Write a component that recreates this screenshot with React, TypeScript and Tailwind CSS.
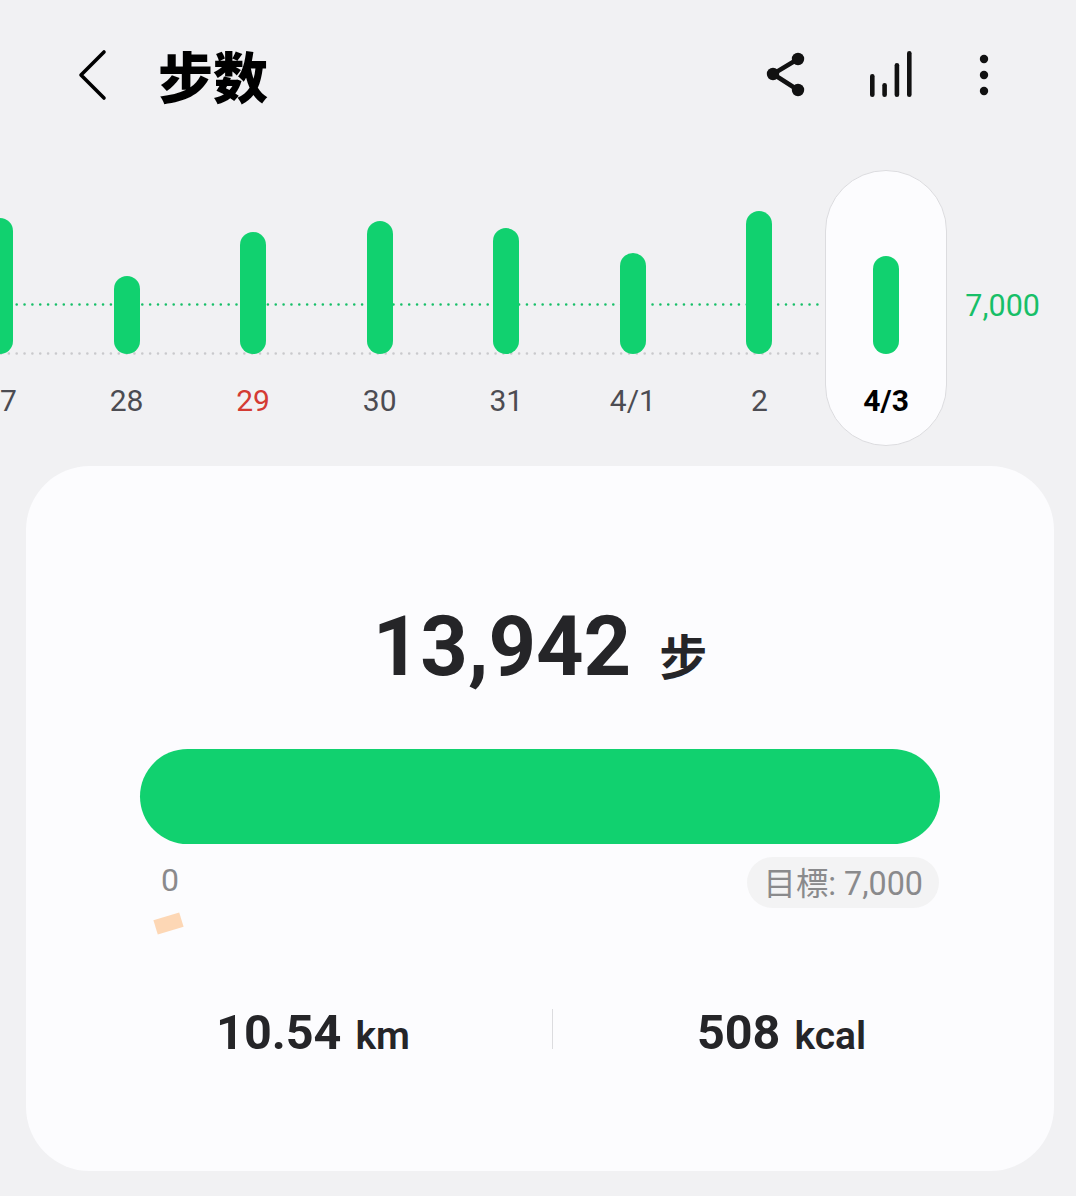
const days = [
  { label: "27", height: 136 },
  { label: "28", height: 78 },
  { label: "29", height: 122, sunday: true },
  { label: "30", height: 133 },
  { label: "31", height: 126 },
  { label: "4/1", height: 101 },
  { label: "2", height: 143 },
  { label: "4/3", height: 98, selected: true },
];

function DottedLine({ color, className }: { color: string; className: string }) {
  return (
    <svg className={className} width="820" height="3" viewBox="0 0 820 3">
      <line
        x1="1"
        y1="1.5"
        x2="820"
        y2="1.5"
        stroke={color}
        strokeWidth="2.6"
        strokeLinecap="round"
        strokeDasharray="0 7.85"
      />
    </svg>
  );
}

function Header() {
  return (
    <header className="flex h-[150px] items-center">
      <svg className="ml-[76px] text-black" width="34" height="54" viewBox="0 0 34 54" fill="none">
        <path d="M28 4 L5 27 L28 50" stroke="currentColor" strokeWidth="3.6" strokeLinecap="round" strokeLinejoin="round" />
      </svg>
      <h1 className="ml-[48px] mt-[8px] text-[55px] leading-none font-black text-black">步数</h1>
      <svg className="ml-auto" width="44" height="50" viewBox="0 0 44 50">
        <path d="M33 9 L8 24 L33 40" fill="none" stroke="#111" strokeWidth="4.5" />
        <circle cx="33" cy="9" r="6.2" fill="#111" />
        <circle cx="8" cy="24" r="6.2" fill="#111" />
        <circle cx="33" cy="40" r="6.2" fill="#111" />
      </svg>
      <svg className="ml-[59px]" width="46" height="50" viewBox="0 0 46 50" fill="#111">
        <rect x="2" y="24" width="4.6" height="23" rx="2.3" />
        <rect x="14.3" y="33" width="4.6" height="14" rx="2.3" />
        <rect x="26.6" y="13" width="4.6" height="34" rx="2.3" />
        <rect x="39" y="1" width="4.6" height="46" rx="2.3" />
      </svg>
      <svg className="ml-[64px] mr-[86px]" width="12" height="50" viewBox="0 0 12 50" fill="#111">
        <circle cx="6" cy="9" r="4.2" />
        <circle cx="6" cy="25" r="4.2" />
        <circle cx="6" cy="41" r="4.2" />
      </svg>
    </header>
  );
}

function StepChart() {
  return (
    <section className="relative mt-[20px] flex h-[276px] overflow-hidden">
      <DottedLine color="#17bf68" className="absolute left-0 top-[133px]" />
      <DottedLine color="#c9c9cc" className="absolute left-0 top-[182px]" />
      <div className="relative -ml-[63.4px] flex">
        {days.map((day) => (
          <div key={day.label} className="flex w-[126.6px] justify-center">
            <div
              className={
                day.selected
                  ? "flex h-full w-[122px] flex-col items-center rounded-full border border-[#dcdcdf] bg-[#fcfcfe]"
                  : "flex h-full w-[122px] flex-col items-center border border-transparent"
              }
            >
              <div className="flex h-[183px] items-end">
                <div
                  className="w-[26px] rounded-full bg-[#11d16f]"
                  style={{ height: day.height }}
                />
              </div>
              <span
                className={
                  day.selected
                    ? "mt-[27px] text-[30px] leading-[40px] font-bold text-black"
                    : day.sunday
                      ? "mt-[27px] text-[30px] leading-[40px] text-[#d43b33]"
                      : "mt-[27px] text-[30px] leading-[40px] text-[#4c4c52]"
                }
              >
                {day.label}
              </span>
            </div>
          </div>
        ))}
      </div>
      <span className="relative ml-[16px] mt-[116px] h-[40px] text-[30.5px] leading-[40px] text-[#17bf68]">7,000</span>
    </section>
  );
}

function Summary() {
  return (
    <section className="ml-[26px] mr-[22px] mt-[20px] h-[705px] rounded-[64px] bg-[#fcfcfe] pt-[135px]">
      <div className="flex items-baseline justify-center text-[#252528]">
        <span className="text-[83px] leading-[92px] font-bold">13,942</span>
        <span className="ml-[28px] text-[48px] leading-none font-bold">步</span>
      </div>
      <div className="mx-[114px] mt-[56px] h-[95px] rounded-full bg-[#11d16f]" />
      <div className="mx-[114px] mt-[13px] flex items-start justify-between">
        <div>
          <div className="ml-[21px] mt-[3px] text-[32px] leading-[40px] text-[#8a8a8c]">0</div>
          <div className="ml-[15px] mt-[16px] h-[15px] w-[27px] -rotate-[17deg] bg-[#fdd7b5]" />
        </div>
        <div className="mr-px flex h-[51px] items-center rounded-full bg-[#f3f3f4] pl-[17px] pr-[16px] pt-[3px] text-[32.3px] text-[#8a8a8c]">
          目標: 7,000
        </div>
      </div>
      <div className="ml-[48px] mt-[72px] flex items-center text-[#252528]">
        <div className="flex w-[478px] items-baseline justify-center">
          <span className="text-[48.5px] leading-[60px] font-bold">10.54</span>
          <span className="ml-[14px] text-[39px] font-semibold">km</span>
        </div>
        <div className="mb-[10px] h-[40px] w-px bg-[#dcdcdf]" />
        <div className="flex w-[457px] items-baseline justify-center">
          <span className="text-[48.5px] leading-[60px] font-bold">508</span>
          <span className="ml-[14px] text-[39px] font-semibold">kcal</span>
        </div>
      </div>
    </section>
  );
}

export default function App() {
  return (
    <div className="h-[1196px] w-[1076px] overflow-hidden bg-[#f1f1f3] font-['Roboto','Noto_Sans_CJK_SC',sans-serif]">
      <Header />
      <StepChart />
      <Summary />
    </div>
  );
}
